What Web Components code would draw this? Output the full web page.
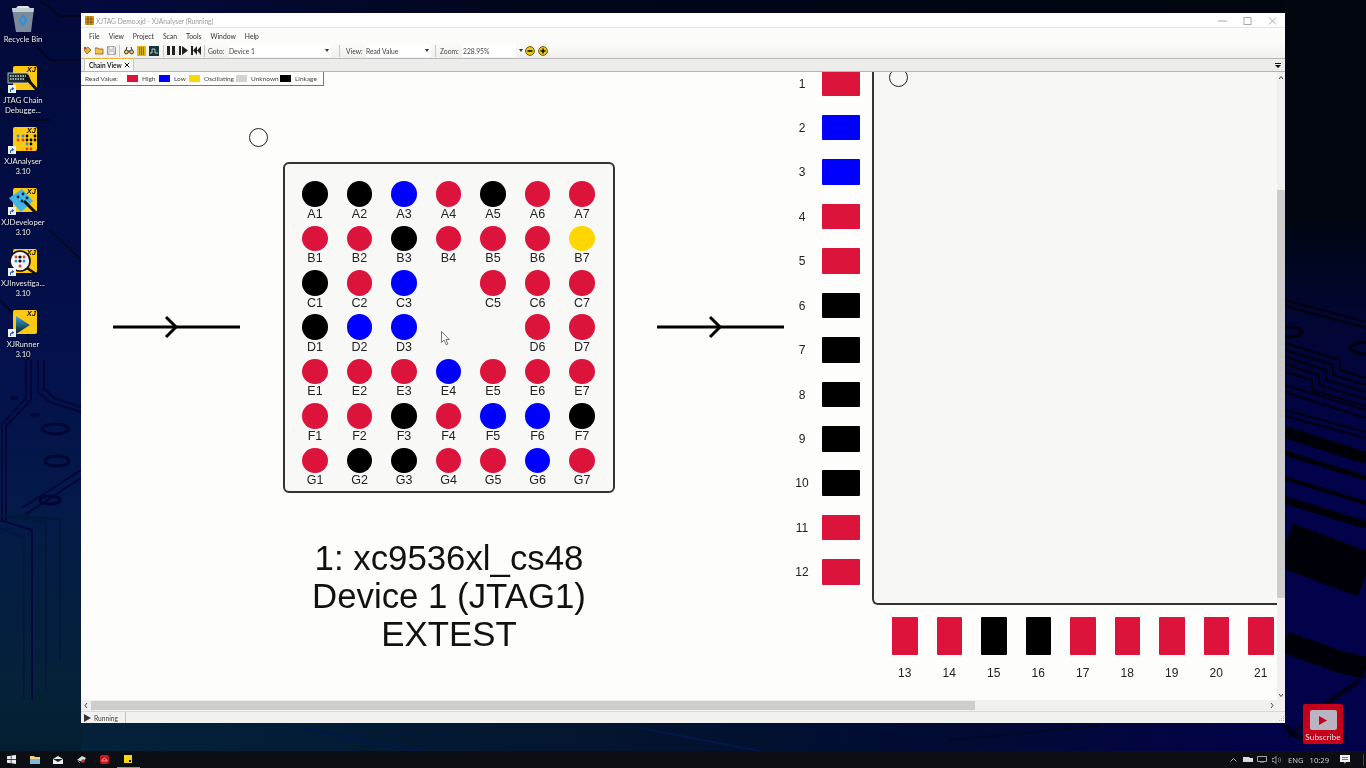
<!DOCTYPE html>
<html lang="en">
<head>
<meta charset="utf-8">
<title>XJAnalyser</title>
<style>
  html, body { margin: 0; padding: 0; height: 100%; overflow: hidden; background: #020a2c; }
  body { font-family: Lato, "Noto Sans", sans-serif; }
</style>
</head>
<body>
<xj-desktop>
  <desk-icon slot="icons" kind="bin" style="--gap:2px">Recycle Bin</desk-icon>
  <desk-icon slot="icons" kind="jtag">JTAG Chain<br>Debugge...</desk-icon>
  <desk-icon slot="icons" kind="analyser">XJAnalyser<br>3.10</desk-icon>
  <desk-icon slot="icons" kind="developer">XJDeveloper<br>3.10</desk-icon>
  <desk-icon slot="icons" kind="investigator">XJInvestiga...<br>3.10</desk-icon>
  <desk-icon slot="icons" kind="runner">XJRunner<br>3.10</desk-icon>
  <xj-window slot="window" title="XJTAG Demo.xjd - XJAnalyser (Running)">
    <chain-view></chain-view>
  </xj-window>
  <subscribe-badge slot="window"></subscribe-badge>
</xj-desktop>

<script>
  const COLORS = { r: "#dc143c", b: "#0000ff", k: "#000000", y: "#ffd700", u: "#d3d3d3" };

  class XjDesktop extends HTMLElement {
    constructor() {
      super();
      this.attachShadow({ mode: "open" }).innerHTML = `
        <style>
          :host { display: flex; flex-direction: column; width: 1366px; height: 768px; overflow: hidden; filter: blur(.3px); }
          .surface {
            position: relative; flex: 1; overflow: hidden; background-color: #02024a;
            background-repeat: no-repeat;
            background-image:
              linear-gradient(180deg, #030a3a 0, #03104c 47%, #041a48 68%, #04223a 90%, #041e30 100%),
              linear-gradient(90deg, #040a40 0, #02061c 35%, #01050f 100%),
              linear-gradient(180deg, #01060f 0, #01060f 28%, #020632 42%, #02024a 62%, #02024a 100%),
              linear-gradient(90deg, #04223a 0, #03142e 45%, #020a34 75%, #02024a 100%);
            background-size: 81px 100%, 1204px 13px, 81px 100%, 1204px 28px;
            background-position: 0 0, 81px 0, 1285px 0, 81px 723px;
          }
          svg.traces { position: absolute; inset: 0; width: 100%; height: 100%; }
          .icons { position: absolute; left: 0; top: 3px; display: grid; grid-auto-rows: 61px; width: 46px; }
        </style>
        <div class="surface">
          <svg class="traces" viewBox="0 0 1366 751" fill="none" stroke-linecap="butt">
            <g stroke="#020638" stroke-width="2">
              <path d="M2 520V424L26 398V360"/>
              <path d="M6 520V426L31 400V360"/>
              <path d="M38 360V392L50 402 81 412"/>
              <path d="M44 360V388L54 398 81 407"/>
              <path d="M22 508L81 470"/>
              <path d="M26 514L81 478"/>
              <path d="M0 520L32 530V700"/>
              <path d="M0 528L24 538V700" stroke="#03183a"/>
              <path d="M0 515L46 522V690" stroke="#03183a"/>
              <path d="M16 515L60 520V660" stroke="#03183a"/>
            </g>
            <g fill="none" stroke="#020634" stroke-width="3">
              <ellipse cx="55" cy="429" rx="13" ry="5"/>
              <ellipse cx="57" cy="461" rx="12" ry="5"/>
              <ellipse cx="50" cy="500" rx="10" ry="4"/>
              <ellipse cx="1290" cy="332" rx="12" ry="5" stroke="#00000e"/>
              <ellipse cx="1366" cy="348" rx="16" ry="6" stroke="#00000e"/>
            </g>
            <g fill="#020638"><ellipse cx="14" cy="398" rx="4" ry="2"/><ellipse cx="35" cy="415" rx="5" ry="2"/></g>
            <g stroke="#02061e" stroke-width="2">
              <path d="M20 30L50 60 81 60"/><path d="M0 90L30 120 50 120"/><path d="M40 0L60 16 81 16"/>
              <path d="M50 230L81 260"/><path d="M0 300L28 330 28 360"/>
            </g>
            <g stroke="#00000e" stroke-width="2">
              <path d="M1285 343L1340 360V370L1366 378"/>
              <path d="M1285 350L1333 365V375L1366 385"/>
              <path d="M1285 357L1326 370V380L1366 392"/>
              <path d="M1285 364L1319 375V385L1366 399"/>
              <path d="M1285 372L1312 380V390L1366 406"/>
              <path d="M1285 385L1366 410"/>
              <path d="M1285 392L1366 418"/>
              <path d="M1285 410L1366 432"/>
              <path d="M1285 416L1366 438"/>
              <path d="M1285 300L1366 322"/><path d="M1285 306L1366 328"/>
            </g>
            <g stroke="#000008">
              <path d="M1285 432L1366 458" stroke-width="12"/>
              <path d="M1285 453L1366 478" stroke-width="5"/>
              <path d="M1285 478L1366 503" stroke-width="4"/>
              <path d="M1285 500L1366 525" stroke-width="8"/>
              <path d="M1285 545L1366 575" stroke-width="46"/>
              <path d="M1285 642L1340 662 1366 668" stroke-width="22"/>
              <path d="M1288 738L1320 708" stroke-width="2.500" stroke="#000016"/>
            </g>
            <path d="M1285 725C1300 745 1330 745 1345 735" stroke-width="5" stroke="#000016"/>
            <path d="M1320 708L1360 680" stroke-width="4" stroke="#000016"/>
            <g stroke="#02174a" stroke-width="2">
              <path d="M300 728L420 751"/><path d="M640 728L760 751"/>
            </g>
            <path d="M950 740L1100 726" stroke="#010a24" stroke-width="2"/>
          </svg>
          <div class="icons"><slot name="icons"></slot></div>
          <slot name="window"></slot>
        </div>
        <task-bar></task-bar>`;
    }
  }

  const DESK_ART = {
    analyser: `<g fill="#000"><circle cx="14" cy="9" r="1.4"/><circle cx="14" cy="13" r="1.4"/><circle cx="18" cy="13" r="1.4"/><circle cx="22" cy="13" r="1.4"/><circle cx="18" cy="17" r="1.4"/><circle cx="22" cy="9" r="1.4"/></g>
      <g fill="#2a8fe0"><circle cx="5" cy="9" r="1.4"/><circle cx="10" cy="9" r="1.4"/><circle cx="14" cy="17" r="1.4"/></g>
      <g fill="#e8391f"><circle cx="5" cy="13" r="1.4"/><circle cx="10" cy="13" r="1.4"/><circle cx="14" cy="22" r="1.4"/><circle cx="18" cy="22" r="1.4"/></g>`,
    jtag: `<rect x="-5" y="7" width="20" height="10" fill="#1d2a30" stroke="#cfd8dc" stroke-width=".8"/><path d="M-3 10h16M-3 13h16" stroke="#cfd8dc" stroke-dasharray="1.5 1" stroke-width="1.4"/><path d="M12 12l4 3 8 9" stroke="#111" stroke-width="3" fill="none"/><path d="M14 9l3 7" stroke="#111" stroke-width="3"/>`,
    developer: `<path d="M-4 10L9 1l11 12L8 24z" fill="#42b4e6"/><g fill="#123"><circle cx="5" cy="9" r="1.4"/><circle cx="10" cy="6" r="1.4"/><circle cx="9" cy="13" r="1.4"/><circle cx="14" cy="10" r="1.4"/></g><path d="M11 13l13 13" stroke="#111" stroke-width="3"/>`,
    investigator: `<circle cx="7" cy="12" r="10" fill="#f4f4f4" stroke="#111" stroke-width="1.6"/><g fill="#111"><circle cx="7" cy="8" r="1.6"/><circle cx="7" cy="12" r="1.6"/></g><g fill="#2a8fe0"><circle cx="3" cy="12" r="1.5"/><circle cx="11" cy="12" r="1.5"/></g><g fill="#e8391f"><circle cx="3" cy="8" r="1.4"/><circle cx="11" cy="8" r="1.4"/><circle cx="7" cy="17" r="1.5"/></g><path d="M14 19l9 6" stroke="#111" stroke-width="2.4"/>`,
    runner: `<path d="M3 6l14 9-14 9z" fill="url(#run)"/><defs><linearGradient id="run" x1="0" y1="0" x2="0" y2="1"><stop offset="0" stop-color="#39a9dc"/><stop offset="1" stop-color="#071a20"/></linearGradient></defs>`
  };

  class DeskIcon extends HTMLElement {
    constructor() {
      super();
      const kind = this.getAttribute("kind");
      const art = kind === "bin"
        ? `<svg class="bin" width="26" height="28" viewBox="0 0 26 28">
             <path d="M2 3h22l-3 24H6z" fill="#8fa3ad" opacity=".85"/>
             <path d="M2 3h22l-.6 4H2.6z" fill="#c4ced3"/>
             <path d="M6 3l2-2h10l2 2z" fill="#dde3e6"/>
             <path d="M10 15l3-4 3 4-3 5z" fill="none" stroke="#2c8fe0" stroke-width="2"/>
           </svg>`
        : `<div class="logo"><svg width="36" height="30" viewBox="-6 -1 36 30" overflow="visible">${DESK_ART[kind]}</svg><b>XJ</b></div>
           <svg class="link" width="8" height="8" viewBox="0 0 8 8"><rect width="8" height="8" fill="#eef2f7"/><path d="M2 7V4.4L4 3V2l2.4 1.6L4 5.4V4.4L3 5v2z" fill="#1f5fbf"/></svg>`;
      this.attachShadow({ mode: "open" }).innerHTML = `
        <style>
          :host { display: block; position: relative; width: 46px; height: 61px; }
          .art { position: relative; height: 28px; margin-top: 1px; }
          .logo { position: absolute; left: 13px; top: 1px; width: 24px; height: 24px; border-radius: 2px; background: #ffc812; }
          .logo svg { position: absolute; left: -6px; top: -1px; }
          .logo b { position: absolute; right: 1px; top: 0; font: italic bold 7.5px/8px "Liberation Sans", sans-serif; color: #111; }
          .link { position: absolute; left: 8px; top: 20px; }
          .bin { position: absolute; left: 10px; top: 1px; }
          .label {
            margin-top: var(--gap, 2px); text-align: center; color: #e9edf2; white-space: nowrap;
            font: 7.7px/10.4px Lato, "Noto Sans", sans-serif; text-shadow: 0 0 2px #000;
          }
        </style>
        <div class="art">${art}</div>
        <div class="label"><slot></slot></div>`;
    }
  }

  class XjWindow extends HTMLElement {
    constructor() {
      super();
      this.attachShadow({ mode: "open" }).innerHTML = `
        <style>
          :host {
            position: absolute; left: 81px; top: 13px; width: 1204px; height: 710px;
            display: flex; flex-direction: column; background: #fff;
            font: 6.7px Lato, "Noto Sans", sans-serif; color: #333;
          }
          .title { height: 15px; box-sizing: border-box; display: flex; align-items: center; padding: 1px 0 0 4px; gap: 2px; color: #9a9a9a; background: #fff; border-bottom: 1px solid #e4e4e2; }
          .controls { margin-left: auto; display: flex; align-items: center; }
          .controls svg { width: 25px; height: 10px; }
          .work { flex: 1; min-height: 0; position: relative; overflow: hidden; background: #fdfdfc; }
          .scroll-h { height: 11px; display: flex; align-items: center; background: #f0f0f0; color: #444; }
          .scroll-h i { display: block; margin-left: 10px; width: 884px; height: 9px; background: #cdcdcd; }
          .scroll-h svg { flex: none; }
          .scroll-h .l { position: absolute; left: 2px; }
          .scroll-h .rr { position: absolute; right: 10px; }
          .status { height: 12px; display: flex; align-items: center; justify-content: space-between; background: #f1f1f0; border-top: 1px solid #d8d8d8; box-sizing: border-box; }
          .status .cell { display: flex; align-items: center; gap: 3px; width: 45px; height: 100%; padding-left: 3px; box-sizing: border-box; border-right: 1px solid #c4c4c4; color: #444; }
          .bottom { position: relative; }
        </style>
        <div class="title">
          <svg width="9" height="9" viewBox="0 0 9 9"><rect width="9" height="9" fill="#d99a1e"/><path d="M0 3h9M0 6h9M3 0v9M6 0v9" stroke="#7a4a10" stroke-width=".8"/></svg>
          <span>${this.getAttribute("title")}</span>
          <div class="controls">
            <svg viewBox="0 0 25 10"><path d="M8 5h9" stroke="#a8a8a8"/></svg>
            <svg viewBox="0 0 25 10"><rect x="9" y="1.5" width="7" height="7" fill="none" stroke="#a8a8a8"/></svg>
            <svg viewBox="0 0 25 10"><path d="M9 1.5l7 7M16 1.5l-7 7" stroke="#a8a8a8"/></svg>
          </div>
        </div>
        <xj-menu></xj-menu>
        <xj-toolbar></xj-toolbar>
        <xj-tabs></xj-tabs>
        <div class="work"><slot></slot></div>
        <div class="scroll-h bottom">
          <svg class="l" width="6" height="7" viewBox="0 0 6 7"><path d="M4 1L2 3.5 4 6" fill="none" stroke="#444"/></svg>
          <i></i>
          <svg class="rr" width="6" height="7" viewBox="0 0 6 7"><path d="M2 1l2 2.5L2 6" fill="none" stroke="#444"/></svg>
        </div>
        <div class="status">
          <div class="cell"><svg width="7" height="8" viewBox="0 0 7 8"><path d="M0 0l7 4-7 4z" fill="#333"/></svg>Running</div>
          <svg width="6" height="6" viewBox="0 0 6 6"><path d="M4 1h1v1H4zM2 3h1v1H2zM4 3h1v1H4zM0 5h1v1H0zM2 5h1v1H2zM4 5h1v1H4z" fill="#bbb"/></svg>
        </div>`;
    }
  }

  class XjMenu extends HTMLElement {
    constructor() {
      super();
      const items = ["File", "View", "Project", "Scan", "Tools", "Window", "Help"];
      this.attachShadow({ mode: "open" }).innerHTML = `
        <style>
          :host { display: flex; height: 15px; align-items: center; gap: 9px; padding-left: 8px; background: #fbfbf9; color: #333; font: 6.8px Lato, "Noto Sans", sans-serif; }
        </style>
        ${items.map(i => `<span>${i}</span>`).join("")}`;
    }
  }

  class XjToolbar extends HTMLElement {
    constructor() {
      super();
      this.attachShadow({ mode: "open" }).innerHTML = `
        <style>
          :host {
            display: flex; align-items: center; height: 16px; box-sizing: border-box; padding-left: 2px;
            background: linear-gradient(#fbfbf9, #f0f0ee); border-bottom: 1px solid #b8b8b6;
            color: #444; font: 6.7px Lato, "Noto Sans", sans-serif;
          }
          svg { display: block; flex: none; }
          .sep { width: 1px; height: 12px; background: #c6c6c4; flex: none; }
          .field { display: flex; align-items: center; justify-content: space-between; height: 13px; background: #fff; box-sizing: border-box; padding: 0 2px 0 0; flex: none; }
          .field svg { margin-left: auto; }
        </style>
        <svg width="9" height="9" viewBox="0 0 9 9"><path d="M1 4l4-3 3 3-4 4z" fill="#e8b030" stroke="#7a5410" stroke-width=".7"/><circle cx="2" cy="2" r="1.2" fill="#d33"/></svg>
        <svg width="9" height="9" viewBox="0 0 9 9" style="margin-left:3px"><path d="M0 2h3l1 1h4v5H0z" fill="#f2c24c" stroke="#7a5410" stroke-width=".7"/></svg>
        <svg width="9" height="9" viewBox="0 0 9 9" style="margin-left:3px"><path d="M.5.5h7l1 1v7h-8z" fill="#ddd" stroke="#999"/><path d="M2 .5h4v3H2zM2 5.5h5v3H2z" fill="#f4f4f4" stroke="#999" stroke-width=".5"/></svg>
        <div class="sep" style="margin-left:3px"></div>
        <svg width="10" height="9" viewBox="0 0 10 9" style="margin-left:4px"><circle cx="2.4" cy="6" r="1.9" fill="#ffd24a" stroke="#333"/><circle cx="7.6" cy="6" r="1.9" fill="#ffd24a" stroke="#333"/><path d="M2 4l1-3M8 4L7 1M4 5h2" stroke="#333" fill="none"/></svg>
        <svg width="9" height="10" viewBox="0 0 9 10" style="margin-left:3px"><rect width="9" height="10" fill="#e3b90f"/><path d="M2 2h5M2 4h5M2 6h5M2 8h5" stroke="#333" stroke-dasharray="1.2 .8"/></svg>
        <svg width="10" height="10" viewBox="0 0 10 10" style="margin-left:3px"><rect width="10" height="10" fill="#173634"/><path d="M1 7h2V3h3v4h3" fill="none" stroke="#d8e8e0" stroke-width=".8"/></svg>
        <div class="sep" style="margin-left:4px"></div>
        <svg width="8" height="9" viewBox="0 0 8 9" style="margin-left:3px"><path d="M0 0h3v9H0zM5 0h3v9H5z" fill="#222"/></svg>
        <svg width="9" height="9" viewBox="0 0 9 9" style="margin-left:4px"><path d="M0 0h2v9H0zM3 0l6 4.5L3 9z" fill="#222"/></svg>
        <svg width="10" height="9" viewBox="0 0 10 9" style="margin-left:3px"><path d="M0 0h2v9H0zM6 0v9L2 4.5zM10 0v9L6 4.5z" fill="#222"/></svg>
        <div class="sep" style="margin-left:3px"></div>
        <span style="margin-left:3px;width:21px">Goto:</span>
        <div class="field" style="width:102px"><span>Device 1</span><svg width="4" height="3" viewBox="0 0 4 3"><path d="M0 0h4L2 3z" fill="#333"/></svg></div>
        <div class="sep" style="margin-left:8px"></div>
        <span style="margin-left:6px;width:20px">View:</span>
        <div class="field" style="width:65px"><span>Read Value</span><svg width="4" height="3" viewBox="0 0 4 3"><path d="M0 0h4L2 3z" fill="#333"/></svg></div>
        <div class="sep" style="margin-left:4px"></div>
        <span style="margin-left:4px;width:22px">Zoom:</span>
        <div class="field" style="width:54px;padding-left:1px"><span>228.95%</span></div>
        <svg width="4" height="3" viewBox="0 0 4 3" style="margin-left:3px"><path d="M0 0h4L2 3z" fill="#333"/></svg>
        <svg width="10" height="10" viewBox="0 0 10 10" style="margin-left:2px"><circle cx="5" cy="5" r="4.400" fill="#e8c81c" stroke="#6b5a10"/><path d="M2.500 5h5" stroke="#111" stroke-width="1.6"/></svg>
        <svg width="10" height="10" viewBox="0 0 10 10" style="margin-left:3px"><circle cx="5" cy="5" r="4.400" fill="#e8c81c" stroke="#6b5a10"/><path d="M2.500 5h5M5 2.500v5" stroke="#111" stroke-width="1.6"/></svg>`;
    }
  }

  class XjTabs extends HTMLElement {
    constructor() {
      super();
      this.attachShadow({ mode: "open" }).innerHTML = `
        <style>
          :host { display: flex; align-items: flex-end; justify-content: space-between; height: 13px; box-sizing: border-box; padding: 0 4px 0 3px; background: #ececea; border-bottom: 1px solid #b4b4b2; font: 6.5px Lato, "Noto Sans", sans-serif; color: #222; }
          .tab { display: flex; align-items: center; justify-content: space-between; width: 50px; height: 13px; box-sizing: border-box; padding: 0 3px 0 4px; background: #fbfbfb; border: 1px solid #c8c8c6; border-top: 1px solid #f0b030; border-bottom: 0; font-weight: 700; white-space: nowrap; }
          .more { align-self: center; }
        </style>
        <div class="tab">Chain View<svg width="6" height="6" viewBox="0 0 6 6"><path d="M.8.8l4.4 4.4M5.2.8L.8 5.2" stroke="#111"/></svg></div>
        <svg class="more" width="6" height="5" viewBox="0 0 6 5"><path d="M0 0h6v1H0zM0 2h6L3 5z" fill="#111"/></svg>`;
    }
  }

  class ReadLegend extends HTMLElement {
    constructor() {
      super();
      this.attachShadow({ mode: "open" }).innerHTML = `
        <style>
          :host { position: absolute; left: 0; top: 0; width: 243px; height: 14px; box-sizing: border-box; display: flex; align-items: center; padding-left: 4px; background: #fdfdfc; border-right: 1px solid #777; border-bottom: 1px solid #777; font: 6.5px Lato, "Noto Sans", sans-serif; color: #444; white-space: nowrap; z-index: 2; }
          .swatch { width: 11px; height: 7px; flex: none; margin-right: 4px; }
          span { flex: none; }
        </style>
        <span style="width:42px">Read Value:</span>
        <i class="swatch" style="background:${COLORS.r}"></i><span style="width:17px">High</span>
        <i class="swatch" style="background:${COLORS.b}"></i><span style="width:15px">Low</span>
        <i class="swatch" style="background:${COLORS.y}"></i><span style="width:32px">Oscillating</span>
        <i class="swatch" style="background:${COLORS.u}"></i><span style="width:29px">Unknown</span>
        <i class="swatch" style="background:${COLORS.k}"></i><span>Linkage</span>`;
    }
  }

  class BgaChip extends HTMLElement {
    constructor() {
      super();
      const rows = ["kkbrkrr", "rrkrrry", "krb.rrr", "kbb..rr", "rrrbrrr", "rrkrbbk", "rkkrrbr"];
      const balls = rows.map((row, r) => [...row].map((c, i) => c === "."
        ? `<div></div>`
        : `<div class="ball"><i style="background:${COLORS[c]}"></i><span>${"ABCDEFG"[r]}${i + 1}</span></div>`).join("")).join("");
      this.attachShadow({ mode: "open" }).innerHTML = `
        <style>
          :host {
            position: absolute; left: 202px; top: 90px; width: 332px; height: 331px; box-sizing: border-box;
            border: 2px solid #333; border-radius: 6px; background: #f8f8f7; padding: 17.25px 0 0 17.25px;
            display: grid; grid-template-columns: repeat(7, 44.5px); grid-auto-rows: 44.4px;
            font: 12.5px "Liberation Sans", sans-serif; color: #222;
          }
          .ball { display: flex; flex-direction: column; align-items: center; width: 25.5px; }
          i { display: block; width: 25.5px; height: 25.5px; border-radius: 50%; }
          span { line-height: 13px; margin-top: 1px; }
        </style>
        ${balls}`;
    }
  }

  class PinColumn extends HTMLElement {
    constructor() {
      super();
      const colors = "rbbrrkkkkkrr";
      this.attachShadow({ mode: "open" }).innerHTML = `
        <style>
          :host { position: absolute; left: 714px; top: -1.5px; display: grid; grid-auto-rows: 44.45px; font: 12px "Liberation Sans", sans-serif; color: #222; }
          .pin { display: flex; align-items: flex-start; }
          b { font-weight: 400; width: 14px; margin-right: 13px; text-align: center; line-height: 26.5px; }
          i { display: block; width: 38px; height: 25.5px; border-radius: 1px; }
        </style>
        ${[...colors].map((c, n) => `<div class="pin"><b>${n + 1}</b><i style="background:${COLORS[c]}"></i></div>`).join("")}`;
    }
  }

  class PinRow extends HTMLElement {
    constructor() {
      super();
      const colors = "rrkkrrrrr";
      this.attachShadow({ mode: "open" }).innerHTML = `
        <style>
          :host { position: absolute; left: 811px; top: 545px; display: grid; grid-auto-flow: column; grid-auto-columns: 44.5px; font: 12px "Liberation Sans", sans-serif; color: #222; }
          .pin { display: flex; flex-direction: column; align-items: center; width: 25.5px; }
          i { display: block; width: 25.5px; height: 38px; border-radius: 1px; }
          b { font-weight: 400; margin-top: 11px; line-height: 14px; }
        </style>
        ${[...colors].map((c, n) => `<div class="pin"><i style="background:${COLORS[c]}"></i><b>${n + 13}</b></div>`).join("")}`;
    }
  }

  class ChainArrow extends HTMLElement {
    constructor() {
      super();
      this.attachShadow({ mode: "open" }).innerHTML = `
        <style>:host { position: absolute; top: 242px; width: 128px; height: 26px; display: block; } svg { display: block; }</style>
        <svg width="128" height="26" viewBox="0 0 128 26"><path d="M0 13h127" stroke="#000" stroke-width="3"/><path d="M53 3l10 10-10 10" fill="none" stroke="#000" stroke-width="3"/></svg>`;
    }
  }

  class ChainView extends HTMLElement {
    constructor() {
      super();
      this.attachShadow({ mode: "open" }).innerHTML = `
        <style>
          :host { display: block; position: absolute; inset: 0; overflow: hidden; background: #fdfdfc; }
          .ring { position: absolute; width: 19px; height: 19px; box-sizing: border-box; border: 1.8px solid #222; border-radius: 50%; background: transparent; }
          .caption { position: absolute; left: 168px; top: 467px; width: 400px; text-align: center; font: 34.8px/38px "Liberation Sans", sans-serif; color: #111; }
          .panel { position: absolute; left: 791px; top: -6px; width: 412px; height: 539px; box-sizing: border-box; border: solid #333; border-width: 0 0 2px 2px; border-bottom-left-radius: 6px; background: #f7f7f6; }
          .cursor { position: absolute; left: 360px; top: 259px; }
          .vbar { position: absolute; right: 0; top: 0; bottom: 0; width: 8px; background: #f0f0f0; z-index: 3; }
          .vbar i { position: absolute; left: 0; right: 0; top: 118px; height: 408px; background: #cdcdcd; }
          .vbar svg { position: absolute; left: 1px; }
        </style>
        <read-legend></read-legend>
        <div class="ring" style="left:167.5px;top:55.5px"></div>
        <bga-chip></bga-chip>
        <chain-arrow style="left:32px"></chain-arrow>
        <chain-arrow style="left:576px"></chain-arrow>
        <svg class="cursor" width="9" height="15" viewBox="0 0 9 15"><path d="M.5.5v11l2.6-2.4 2 4.6 1.8-.8-2-4.4h3.4z" fill="#fff" stroke="#555" stroke-width=".8"/></svg>
        <div class="caption">1: xc9536xl_cs48<br>Device 1 (JTAG1)<br>EXTEST</div>
        <pin-column></pin-column>
        <div class="panel"></div>
        <div class="ring" style="left:808px;top:-4px"></div>
        <pin-row></pin-row>
        <div class="vbar">
          <svg style="top:3px" width="6" height="5" viewBox="0 0 6 5"><path d="M1 4l2-2.5L5 4" fill="none" stroke="#444"/></svg>
          <i></i>
          <svg style="bottom:2px" width="6" height="5" viewBox="0 0 6 5"><path d="M1 1l2 2.5L5 1" fill="none" stroke="#444"/></svg>
        </div>`;
    }
  }

  class SubscribeBadge extends HTMLElement {
    constructor() {
      super();
      this.attachShadow({ mode: "open" }).innerHTML = `
        <style>
          :host { position: absolute; left: 1303px; top: 704px; width: 40px; height: 40px; display: flex; flex-direction: column; align-items: center; background: #c4001a; border-radius: 2px; color: #e8dfe2; font: 8.3px Lato, "Noto Sans", sans-serif; }
          .tube { margin-top: 6px; width: 27px; height: 20px; border-radius: 2px; background: #b9b4c2; display: flex; align-items: center; justify-content: center; }
          span { margin-top: 2px; line-height: 10px; }
        </style>
        <div class="tube"><svg width="8" height="9" viewBox="0 0 8 9"><path d="M0 0l8 4.5L0 9z" fill="#c4001a"/></svg></div>
        <span>Subscribe</span>`;
    }
  }

  class TaskBar extends HTMLElement {
    constructor() {
      super();
      this.attachShadow({ mode: "open" }).innerHTML = `
        <style>
          :host { display: flex; align-items: center; height: 17px; background: #0b0e13; color: #c8ccd0; font: 7.6px "Noto Sans", sans-serif; position: relative; }
          .app { width: 23.4px; height: 17px; display: flex; align-items: center; justify-content: center; flex: none; box-sizing: border-box; }
          .app.on { border-bottom: 1px solid #5b9bd5; }
          .start { width: 23px; }
          .tray { margin-left: auto; display: flex; align-items: center; height: 100%; }
          .tray > * { flex: none; }
          .end { width: 1px; height: 12px; background: #444; margin: 0 2px 0 13px; }
        </style>
        <div class="app start"><svg width="9" height="9" viewBox="0 0 9 9"><path d="M0 1.3L3.8.7v3.4H0zM4.4.6L9 0v4.1H4.4zM0 4.8h3.8v3.5L0 7.7zM4.4 4.8H9V9l-4.6-.7z" fill="#e8ecef"/></svg></div>
        <div class="app"><svg width="10" height="8" viewBox="0 0 10 8"><path d="M0 0h4l1 1h5v7H0z" fill="#f3d27a"/><rect y="3" width="10" height="5" fill="#7fb8dc"/></svg></div>
        <div class="app"><svg width="10" height="8" viewBox="0 0 10 8"><path d="M0 3l5-3 5 3v5H0z" fill="#eee"/><path d="M0 3l5 3 5-3" fill="#222"/></svg></div>
        <div class="app"><svg width="11" height="9" viewBox="0 0 11 9"><path d="M1 5l5-4 4 2-3 4z" fill="#d8dce6"/><circle cx="7" cy="6" r="1.8" fill="#c33"/><path d="M2 6l2 2" stroke="#5577aa"/></svg></div>
        <div class="app"><svg width="9" height="9" viewBox="0 0 9 9"><rect width="9" height="9" rx="2" fill="#c4161c"/><path d="M2 5l2.5-2L7 5v1H2z" fill="none" stroke="#f2b8b8" stroke-width=".8"/></svg></div>
        <div class="app on"><svg width="8" height="8" viewBox="0 0 8 8"><rect width="8" height="8" fill="#f5d90e"/><rect x="5" y="5" width="2" height="2" fill="#111"/></svg></div>
        <div class="tray">
          <svg width="7" height="4" viewBox="0 0 7 4" style="margin-right:6px"><path d="M.5 3.5L3.5.5l3 3" fill="none" stroke="#c8ccd0" stroke-width=".8"/></svg>
          <svg width="10" height="7" viewBox="0 0 10 7" style="margin-right:4px"><path d="M0 1h6l1 1h3v4H0z" fill="#d8dce0"/></svg>
          <svg width="10" height="7" viewBox="0 0 10 7" style="margin-right:5px"><path d="M.5.5h9v5h-9zM3 7h4" fill="none" stroke="#c8ccd0" stroke-width=".8"/></svg>
          <svg width="9" height="8" viewBox="0 0 9 8" style="margin-right:7px"><path d="M0 2.5h2L4 .5v7l-2-2H0z" fill="none" stroke="#c8ccd0" stroke-width=".7"/><path d="M6 2c1 1 1 3 0 4M7.5 1c1.500 2 1.500 4 0 6" fill="none" stroke="#888" stroke-width=".7"/></svg>
          <span style="margin-right:6px">ENG</span>
          <span style="margin-right:11px">10:29</span>
          <svg width="10" height="9" viewBox="0 0 10 9"><path d="M0 0h10v7H6L4.500 9V7H0z" fill="#f2f2f2"/><path d="M2 2.500h6M2 4.500h6" stroke="#444" stroke-width=".7"/></svg>
          <div class="end"></div>
        </div>`;
    }
  }

  customElements.define("desk-icon", DeskIcon);
  customElements.define("xj-menu", XjMenu);
  customElements.define("xj-toolbar", XjToolbar);
  customElements.define("xj-tabs", XjTabs);
  customElements.define("read-legend", ReadLegend);
  customElements.define("bga-chip", BgaChip);
  customElements.define("pin-column", PinColumn);
  customElements.define("pin-row", PinRow);
  customElements.define("chain-arrow", ChainArrow);
  customElements.define("chain-view", ChainView);
  customElements.define("xj-window", XjWindow);
  customElements.define("subscribe-badge", SubscribeBadge);
  customElements.define("task-bar", TaskBar);
  customElements.define("xj-desktop", XjDesktop);
</script>
</body>
</html>
